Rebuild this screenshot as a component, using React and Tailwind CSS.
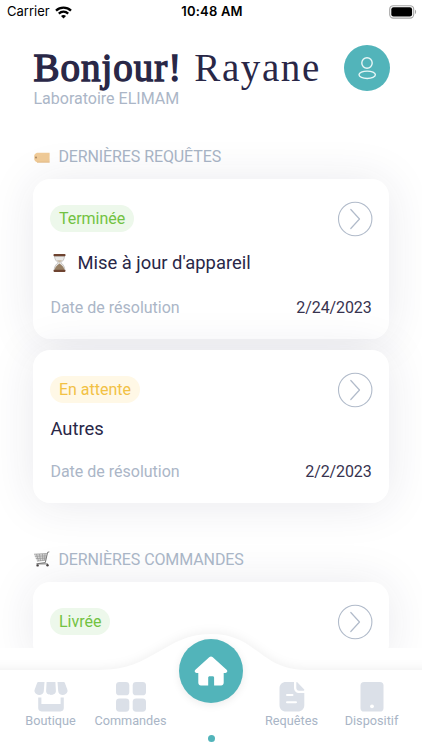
const requests = [
  { id: 1, status: "Terminée", title: "Mise à jour d'appareil", date: "2/24/2023", urgent: true },
  { id: 2, status: "En attente", title: "Autres", date: "2/2/2023" },
];

const badgeColors = {
  Terminée: "bg-[#edf8eb] text-[#72c242]",
  Livrée: "bg-[#edf8eb] text-[#72c242]",
  "En attente": "bg-[#fff8e6] text-[#f2c144]",
};

const WifiIcon = () => (
  <svg className="ml-[5px] h-[13px] w-[17px]" viewBox="0 0 17 13" fill="none" stroke="#000" strokeWidth="2.3">
    <path d="M1 4.6C5.2.6 11.8.6 16 4.6" />
    <path d="M3.8 7.6c2.7-2.5 6.7-2.5 9.4 0" />
    <path d="M8.5 12.5 6 9.9c1.4-1.3 3.6-1.3 5 0z" fill="#000" stroke="none" />
  </svg>
);

const BatteryIcon = () => (
  <svg className="h-[14px] w-[28px]" viewBox="0 0 28 14">
    <rect x=".7" y=".7" width="24" height="12.4" rx="3.6" fill="#fff" stroke="#a5a5a5" strokeWidth="1.1" />
    <rect x="2.3" y="2.3" width="20.8" height="9.2" rx="2.2" fill="#000" />
    <path d="M26 4.8c1.5.6 1.5 3.6 0 4.2z" fill="#a5a5a5" />
  </svg>
);

const TagIcon = () => (
  <svg className="h-[11px] w-[17px]" viewBox="0 0 17 11">
    <path d="M4 .8h12.6v9.4H4C2.6 9.8 1.2 8.6 1.2 7V4C1.2 2.4 2.6 1.2 4 .8z" fill="#f0cb98" />
    <path d="M4 10.2h12.6" stroke="#e2b780" strokeWidth=".8" />
    <circle cx="3" cy="5.5" r="1" fill="#a98762" />
  </svg>
);

const CartIcon = () => (
  <svg className="h-[17px] w-[17px]" viewBox="0 0 17 17" fill="none">
    <path d="M1 3.2 13.8 2.5 12.6 9.2 4 10.2z" fill="#d9d9d9" />
    <path d="M1 3.2l12.8-.7M1.8 5.3l11.7-.4M2.8 7.5l10.2-.4M4 10.2l8.6-1M3.5 3.2l2 6.8M6.5 3l1 6.8M9.5 2.9l.3 6.6M12 2.7l-.6 6.6" stroke="#929292" strokeWidth=".7" />
    <path d="M16.3.9l-1.7.4-2.3 10.3-8 1.1M3.3 12.9h11.5" stroke="#777" strokeWidth="1" />
    <circle cx="4.6" cy="14.4" r="1.2" fill="#484343" />
    <circle cx="14.5" cy="14.2" r="1.2" fill="#484343" />
  </svg>
);

const HourglassIcon = () => (
  <svg className="ml-[3px] mr-[11px] h-[20px] w-[13px]" viewBox="0 0 13 20">
    <path d="M1.5 3c.2 3.5 1.5 5 3.8 6.7C2.5 11.5 1.3 14 1.2 17h10.6c-.1-3-1.3-5.5-4.1-7.3C10 8 11.3 6.5 11.5 3z" fill="#e9e9e8" stroke="#aaa6a2" strokeWidth=".6" />
    <path d="M6.5 10.6C3.6 12.5 2 14.3 1.7 17h9.6c-.3-2.7-1.9-4.5-4.8-6.4z" fill="#978065" />
    <path d="M3.8 7.3h5.4L6.5 9.7z" fill="#c7b9a5" />
    <rect x=".5" y="1" width="12" height="2.2" rx=".8" fill="#6e4330" />
    <rect x=".5" y="16.7" width="12" height="2.2" rx=".8" fill="#6e4330" />
  </svg>
);

const ArrowCircle = () => (
  <svg className="h-[36px] w-[36px]" viewBox="0 0 36 36" fill="none" stroke="#b1bbca">
    <circle cx="18.2" cy="18" r="16.7" strokeWidth="1.1" />
    <path d="M13.8 8.5l8.7 9.5-8.7 9.5" strokeWidth="1.2" strokeLinecap="round" strokeLinejoin="round" />
  </svg>
);

const SectionTitle = ({ icon, children }) => (
  <h2 className="flex h-5 items-center gap-2 text-[16px] tracking-[-0.1px] text-[#a9b5c6]">
    {icon}
    <span className="whitespace-nowrap">{children}</span>
  </h2>
);

const CardTop = ({ status }) => (
  <div className="flex h-[36px] items-center justify-between">
    <span className={`flex h-[27px] items-center rounded-full px-[8.5px] pt-px text-[16px] ${badgeColors[status]}`}>
      {status}
    </span>
    <div className="-mr-px">
      <ArrowCircle />
    </div>
  </div>
);

const Card = ({ children }) => (
  <div className="rounded-[17px] bg-white px-[17px] pb-[21px] pt-[21.5px] shadow-[0_2px_46px_rgba(38,35,75,0.1)]">
    {children}
  </div>
);

const RequestCard = ({ status, title, date, urgent }) => (
  <Card>
    <CardTop status={status} />
    <div className={`flex items-center text-[18.4px] text-[#292747] ${urgent ? "mt-[11.5px] h-[30px]" : "mt-[9px] h-[24px]"}`}>
      {urgent && <HourglassIcon />}
      {title}
    </div>
    <div className={`flex h-[20px] items-center justify-between text-[16px] ${urgent ? "mt-[20px]" : "mt-[21.5px]"}`}>
      <span className="text-[#abb6c7]">Date de résolution</span>
      <span className="tracking-[-0.1px] text-[#37334f]">{date}</span>
    </div>
  </Card>
);

const ShopIcon = () => (
  <svg className="h-[30px] w-[34px]" viewBox="0 0 34 30" fill="#dbe0e8">
    <path d="M4.3 0h6.2L9.8 9c-.2 5-8 5.3-9.3.5-.2-.8 0-1.5.3-2.3L3 1.2C3.2.4 3.7 0 4.3 0zM12.6 0h8.8l.5 9c0 5.2-9.8 5.2-9.8 0zM23.5 0h6.2c.6 0 1.1.4 1.3 1.2l2.2 6c.3.8.5 1.5.3 2.3-1.3 4.8-9.1 4.5-9.3-.5z" />
    <path d="M4.2 15.4h3.2v6.7h19.2v-6.7h3.2v10.7c0 2-1.2 3.3-3.2 3.3H7.4c-2 0-3.2-1.3-3.2-3.3z" />
  </svg>
);

const GridIcon = () => (
  <svg className="h-[30px] w-[30px]" viewBox="0 0 30 30" fill="#dbe0e8">
    <rect width="13.3" height="13.3" rx="3.4" />
    <rect x="16.7" width="13.3" height="13.3" rx="3.4" />
    <rect y="16.4" width="13.3" height="13.3" rx="3.4" />
    <rect x="16.7" y="16.4" width="13.3" height="13.3" rx="3.4" />
  </svg>
);

const FileIcon = () => (
  <svg className="h-[30px] w-[26px]" viewBox="0 0 26 30">
    <path d="M7 0h8v5.5c0 3.500 2 5.500 5.500 5.500h4.800V23c0 4-2.700 6.500-6.500 6.500H7c-4 0-6.500-2.500-6.500-6.500V6.500C.5 2.500 3 0 7 0z" fill="#dbe0e8" />
    <path d="M17.3.6c0-.6.6-.7 1-.3l6.7 7c.6.6.3 1.5-.5 1.5h-4.400c-1.700 0-2.800-1.200-2.800-2.800z" fill="#dbe0e8" />
    <path d="M8 13h5.5M8 20.3h9" stroke="#fff" strokeWidth="2" strokeLinecap="round" />
  </svg>
);

const TabletIcon = () => (
  <svg className="h-[30px] w-[24px]" viewBox="0 0 24 30">
    <rect x=".5" width="23" height="29.5" rx="3.6" fill="#dbe0e8" />
    <circle cx="12" cy="24.3" r="1.9" fill="#fff" />
  </svg>
);

const HomeIcon = () => (
  <svg className="h-[30px] w-[34px]" viewBox="0 0 34 30" fill="#fff">
    <path d="M15.2 1.2c1.1-1 2.5-1 3.6 0l13.8 12.6c1.400 1.300.7 3.100-1.200 3.100h-1.700v9.900c0 1.600-1.100 2.600-2.600 2.600h-7v-7.600c0-1-.6-1.500-1.500-1.500h-2.900c-.9 0-1.500.5-1.500 1.500v7.600H6.900c-1.500 0-2.600-1-2.600-2.600v-9.900H2.600c-1.900 0-2.600-1.800-1.200-3.100z" />
  </svg>
);

const NavItem = ({ icon, label }) => (
  <div className="flex w-[80px] flex-col items-center text-[12.7px] leading-[16px] text-[#a9b5c6]">
    {icon}
    <span className="mt-px">{label}</span>
  </div>
);

const BottomNav = () => (
  <nav className="relative h-[102px] bg-white">
    <svg className="absolute left-0 -top-[34px] h-[136px] w-[422px]" viewBox="0 0 422 136">
      <path
        className="drop-shadow-[0_-2px_5px_rgba(0,0,0,0.055)]"
        d="M-20 56H100C153 56 165 20 211 20S260 56 306 56H442V150H-20z"
        fill="#fff"
      />
    </svg>
    <div className="relative flex justify-between px-[10.5px] pt-[34px]">
      <div className="flex">
        <NavItem icon={<ShopIcon />} label="Boutique" />
        <NavItem icon={<GridIcon />} label="Commandes" />
      </div>
      <div className="flex">
        <NavItem icon={<FileIcon />} label="Requêtes" />
        <NavItem icon={<TabletIcon />} label="Dispositif" />
      </div>
    </div>
    <button className="absolute left-[179px] -top-[9px] flex h-[64px] w-[64px] items-center justify-center rounded-full bg-[#52b4ba] shadow-[0_2px_8px_rgba(0,0,0,0.08)]">
      <HomeIcon />
    </button>
    <span className="absolute left-[207.5px] top-[87px] h-[7px] w-[7px] rounded-full bg-[#52b4ba]" />
  </nav>
);

export default function App() {
  return (
    <div className="h-[750px] w-[422px] overflow-hidden bg-white font-[Roboto,sans-serif]">
      <div className="flex h-[648px] flex-col overflow-hidden">
        <header className="grid h-[24px] shrink-0 grid-cols-3 items-center pl-[7px] pr-[5px] font-[Inter,sans-serif] text-[13px] text-black">
          <span className="flex items-center">
            Carrier
            <WifiIcon />
          </span>
          <span className="whitespace-nowrap text-center font-semibold tracking-[0.2px]">10:48 AM</span>
          <span className="flex justify-end">
            <BatteryIcon />
          </span>
        </header>

        <div className="flex h-[123px] shrink-0 items-start justify-between pl-[33.5px] pr-[32.5px] pt-[21px]">
          <div>
            <h1 className="flex h-[45px] items-center gap-[12px] whitespace-nowrap font-['Liberation_Serif',serif] text-[39px] leading-[45px] text-[#292747]">
              <span className="tracking-[1px] [-webkit-text-stroke:1.4px_#292747]">Bonjour!</span>
              <span className="tracking-[1.6px]">Rayane</span>
            </h1>
            <p className="text-[16px] leading-[18px] text-[#abb6c7]">Laboratoire ELIMAM</p>
          </div>
          <div className="flex h-[46px] w-[46px] items-center justify-center rounded-full bg-[#52b4ba]">
            <svg className="h-[24px] w-[20px]" viewBox="0 0 20 24" fill="none" stroke="#e8f7f7" strokeWidth="1.4">
              <circle cx="10" cy="7" r="5.2" />
              <ellipse cx="10.2" cy="18.8" rx="8.2" ry="3.7" />
            </svg>
          </div>
        </div>

        <section className="shrink-0 px-[33.4px]">
          <SectionTitle icon={<TagIcon />}>DERNIÈRES REQUÊTES</SectionTitle>
          <div className="mt-[12px] flex flex-col gap-[11px]">
            {requests.map((item) => (
              <RequestCard key={item.id} {...item} />
            ))}
          </div>
        </section>

        <section className="mt-[46.5px] shrink-0 px-[33.4px]">
          <SectionTitle icon={<CartIcon />}>DERNIÈRES COMMANDES</SectionTitle>
          <div className="mt-[12.5px]">
            <Card>
              <CardTop status="Livrée" />
            </Card>
          </div>
        </section>
      </div>
      <BottomNav />
    </div>
  );
}
